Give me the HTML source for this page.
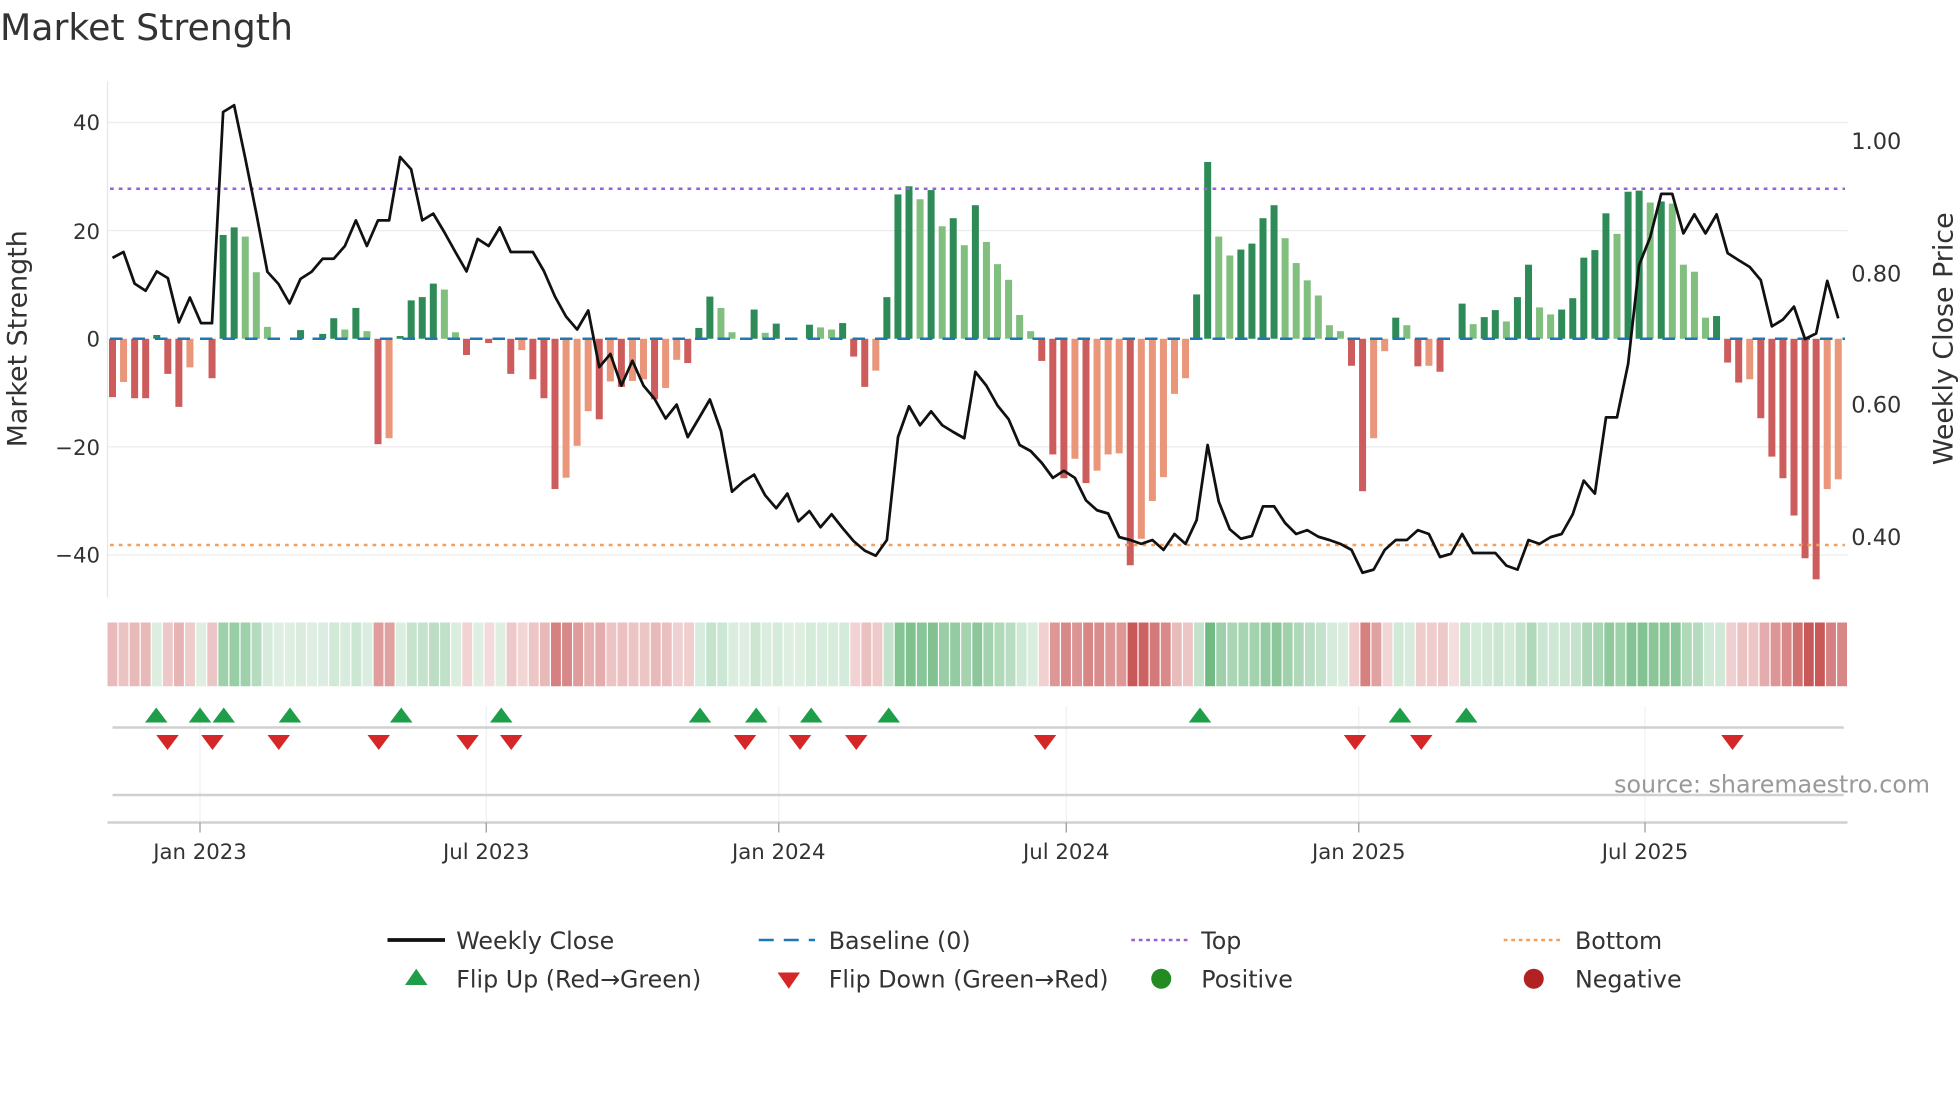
<!DOCTYPE html>
<html><head><meta charset="utf-8"><style>
html,body{margin:0;padding:0;background:#fff;}
svg{display:block;font-family:"DejaVu Sans","Liberation Sans",sans-serif;}
</style></head><body>
<svg id="s" width="1960" height="1102" viewBox="0 0 1568 881.6" xmlns="http://www.w3.org/2000/svg">
<text x="0" y="32" font-size="29" fill="#333">Market Strength</text>
<g stroke="#ececec" stroke-width="1">
<line x1="86" x2="1478" y1="98" y2="98"/><line x1="86" x2="1478" y1="184.5" y2="184.5"/>
<line x1="86" x2="1478" y1="357.5" y2="357.5"/><line x1="86" x2="1478" y1="444" y2="444"/>
</g>
<line x1="86" x2="86" y1="65" y2="478" stroke="#e6e6e6"/>
<g font-size="17" fill="#333" text-anchor="end">
<text x="80" y="104">40</text><text x="80" y="191">20</text><text x="80" y="277">0</text>
<text x="80" y="364">−20</text><text x="80" y="450">−40</text>
</g>
<g font-size="18" fill="#333">
<text x="1481" y="119">1.00</text><text x="1481" y="225">0.80</text>
<text x="1481" y="330">0.60</text><text x="1481" y="436">0.40</text>
</g>
<text transform="translate(21,271) rotate(-90)" text-anchor="middle" font-size="21.5" fill="#333">Market Strength</text>
<text transform="translate(1562,271) rotate(-90)" text-anchor="middle" font-size="21.5" fill="#333">Weekly Close Price</text>
<g id="bars"></g>
<line x1="88" x2="1476" y1="271" y2="271" stroke="#1f77b4" stroke-width="2" stroke-dasharray="10,8"/>
<line x1="88" x2="1476" y1="151" y2="151" stroke="#9b5fd9" stroke-width="2" stroke-dasharray="3,4"/>
<line x1="88" x2="1476" y1="436" y2="436" stroke="#f0a060" stroke-width="2" stroke-dasharray="3,4"/>
<polyline id="price" fill="none" stroke="#111" stroke-width="2.2" stroke-linejoin="round"/>
<g id="heat"></g>
<g stroke="#eef0f2" stroke-width="1">
<line x1="160" x2="160" y1="565" y2="658"/><line x1="389" x2="389" y1="565" y2="658"/>
<line x1="623" x2="623" y1="565" y2="658"/><line x1="853" x2="853" y1="565" y2="658"/>
<line x1="1087" x2="1087" y1="565" y2="658"/><line x1="1316" x2="1316" y1="565" y2="658"/>
</g>
<line x1="90" x2="1475" y1="582" y2="582" stroke="#d0d0d0" stroke-width="2"/>
<line x1="90" x2="1475" y1="636" y2="636" stroke="#d0d0d0" stroke-width="2"/>
<line x1="86" x2="1478" y1="658" y2="658" stroke="#d0d0d0" stroke-width="2"/>
<g stroke="#999" stroke-width="1">
<line x1="160" x2="160" y1="658" y2="666"/><line x1="389" x2="389" y1="658" y2="666"/>
<line x1="623" x2="623" y1="658" y2="666"/><line x1="853" x2="853" y1="658" y2="666"/>
<line x1="1087" x2="1087" y1="658" y2="666"/><line x1="1316" x2="1316" y1="658" y2="666"/>
</g>
<g id="flips"></g>
<text x="1544" y="634" text-anchor="end" font-size="19" fill="#999">source: sharemaestro.com</text>
<g font-size="17" fill="#333" text-anchor="middle">
<text x="160" y="687">Jan 2023</text><text x="389" y="687">Jul 2023</text>
<text x="623" y="687">Jan 2024</text><text x="853" y="687">Jul 2024</text>
<text x="1087" y="687">Jan 2025</text><text x="1316" y="687">Jul 2025</text>
</g>
<g font-size="19" fill="#333">
<line x1="310" x2="356" y1="752" y2="752" stroke="#111" stroke-width="3"/>
<text x="365" y="759">Weekly Close</text>
<line x1="607" x2="652" y1="752" y2="752" stroke="#1f77b4" stroke-width="2" stroke-dasharray="12,8"/>
<text x="663" y="759">Baseline (0)</text>
<line x1="905" x2="950" y1="752" y2="752" stroke="#9b5fd9" stroke-width="2" stroke-dasharray="3,3"/>
<text x="961" y="759">Top</text>
<line x1="1203" x2="1248" y1="752" y2="752" stroke="#f0a060" stroke-width="2" stroke-dasharray="3,3"/>
<text x="1260" y="759">Bottom</text>
<polygon points="324,788 342,788 333,775" fill="#1e9e48"/>
<text x="365" y="790">Flip Up (Red→Green)</text>
<polygon points="622,778 640,778 631,791" fill="#d62728"/>
<text x="663" y="790">Flip Down (Green→Red)</text>
<circle cx="929" cy="783" r="8" fill="#228b22"/>
<text x="961" y="790">Positive</text>
<circle cx="1227" cy="783" r="8" fill="#b22222"/>
<text x="1260" y="790">Negative</text>
</g>
</svg>
<script>
var NS="http://www.w3.org/2000/svg";
function el(t,a,p){var e=document.createElementNS(NS,t);for(var k in a)e.setAttribute(k,a[k]);p.appendChild(e);return e;}
var V=[-10.8,-8,-11,-11,0.7,-6.5,-12.6,-5.3,0,-7.3,19.2,20.6,18.9,12.3,2.2,0,0,1.6,0,0.9,3.8,1.7,5.7,1.4,-19.5,-18.4,0.5,7.1,7.7,10.2,9.1,1.2,-3,0,-0.8,0,-6.5,-2.1,-7.5,-11,-27.8,-25.7,-19.8,-13.4,-14.9,-7.9,-8.9,-7.8,-7.5,-11.2,-9.1,-3.9,-4.5,2,7.8,5.7,1.2,0,5.4,1.1,2.8,0,0,2.6,2.1,1.7,2.9,-3.3,-8.9,-5.9,7.7,26.7,28.2,25.8,27.5,20.8,22.3,17.3,24.7,
17.9,13.8,10.9,4.4,1.4,-4.1,-21.4,-25.8,-22.2,-26.7,-24.4,-21.4,-21.2,-41.9,-37,-30,-25.6,-10.2,-7.3,8.2,32.7,18.9,15.4,16.5,17.6,22.3,24.7,18.6,14,10.8,8,2.5,1.4,-5,-28.2,-18.4,-2.3,3.9,2.5,-5.1,-5,-6.1,-0.2,6.5,2.7,4,5.3,3.2,7.7,13.7,5.8,4.5,5.4,7.5,15,16.4,23.2,19.4,27.2,27.4,25.2,25.4,25,13.7,12.4,3.9,4.2,-4.4,-8.1,-7.5,-14.7,-21.8,-25.8,-32.7,-40.6,-44.5,-27.8,-26];
var P1=[652,637,717,735,686,703,815,752,817,817,283,266,400,540,687,718,767,705,687,654,654,622,557,622,557,557,397,428,557,540,587,637,686,604,622,575,637,637,637,685,750,800,833,785,928,895,975,912,975,1008,1058,1023,1105,1058,1010,1090,1243,1218,1200,1252,1285,1248,1318,1292,1333,1300,1335,1368,1392,1405,1365,1105,1027,1075,1040,1075,1092,1108,940,
975,1025,1060,1125,1140,1170,1208,1190,1208,1265,1290,1298,1358,1365,1375,1365,1390,1350,1375,1315,1125,1268,1338,1362,1355,1280,1280,1322,1350,1340,1357,1365,1375,1390,1448,1440,1390,1365,1365,1340,1350,1408,1400,1350,1398,1398,1398,1430,1440,1365,1375,1358,1350,1300,1215,1248,1055,1055,920,670,600,490,490,590,542,590,542,640,658,675,708,825,808,775,857,843,710,805];
var C={G:"#2e8b57",g:"#80bf7d",R:"#cd5c5c",r:"#e9967a"};
var bars=document.getElementById("bars"),heat=document.getElementById("heat"),pts=[];
for(var i=0;i<V.length;i++){
 var x=90+8.85*i,v=V[i],pv=i>0?V[i-1]:0,c;
 if(v>=0)c=(v>=pv)?C.G:C.g; else c=(v<=pv)?C.R:C.r;
 if(Math.abs(v)>0.3){var y0=271,y1=271-4.325*v;
  el("rect",{x:x-2.8,y:Math.min(y0,y1),width:5.6,height:Math.abs(y1-y0),fill:c},bars);}
 var a=Math.min(1,0.2+Math.abs(v)/40*0.8);
 var col=v>=0?"rgba(60,160,85,"+(a*0.85)+")":"rgba(195,70,70,"+(a*0.9)+")";
 el("rect",{x:86+8.87*i,y:498,width:7.9,height:51,fill:col},heat);
 pts.push(x.toFixed(1)+","+(P1[i]/3.16).toFixed(1));
}
document.getElementById("price").setAttribute("points",pts.join(" "));
var f=document.getElementById("flips");
[125,160,179,232,321,401,560,605,649,711,960,1120,1173].forEach(function(x){el("polygon",{points:(x-9)+",578 "+(x+9)+",578 "+x+",566",fill:"#1e9e48"},f);});
[134,170,223,303,374,409,596,640,685,836,1084,1137,1386].forEach(function(x){el("polygon",{points:(x-9)+",588 "+(x+9)+",588 "+x+",600",fill:"#d62728"},f);});
</script>
</body></html>
